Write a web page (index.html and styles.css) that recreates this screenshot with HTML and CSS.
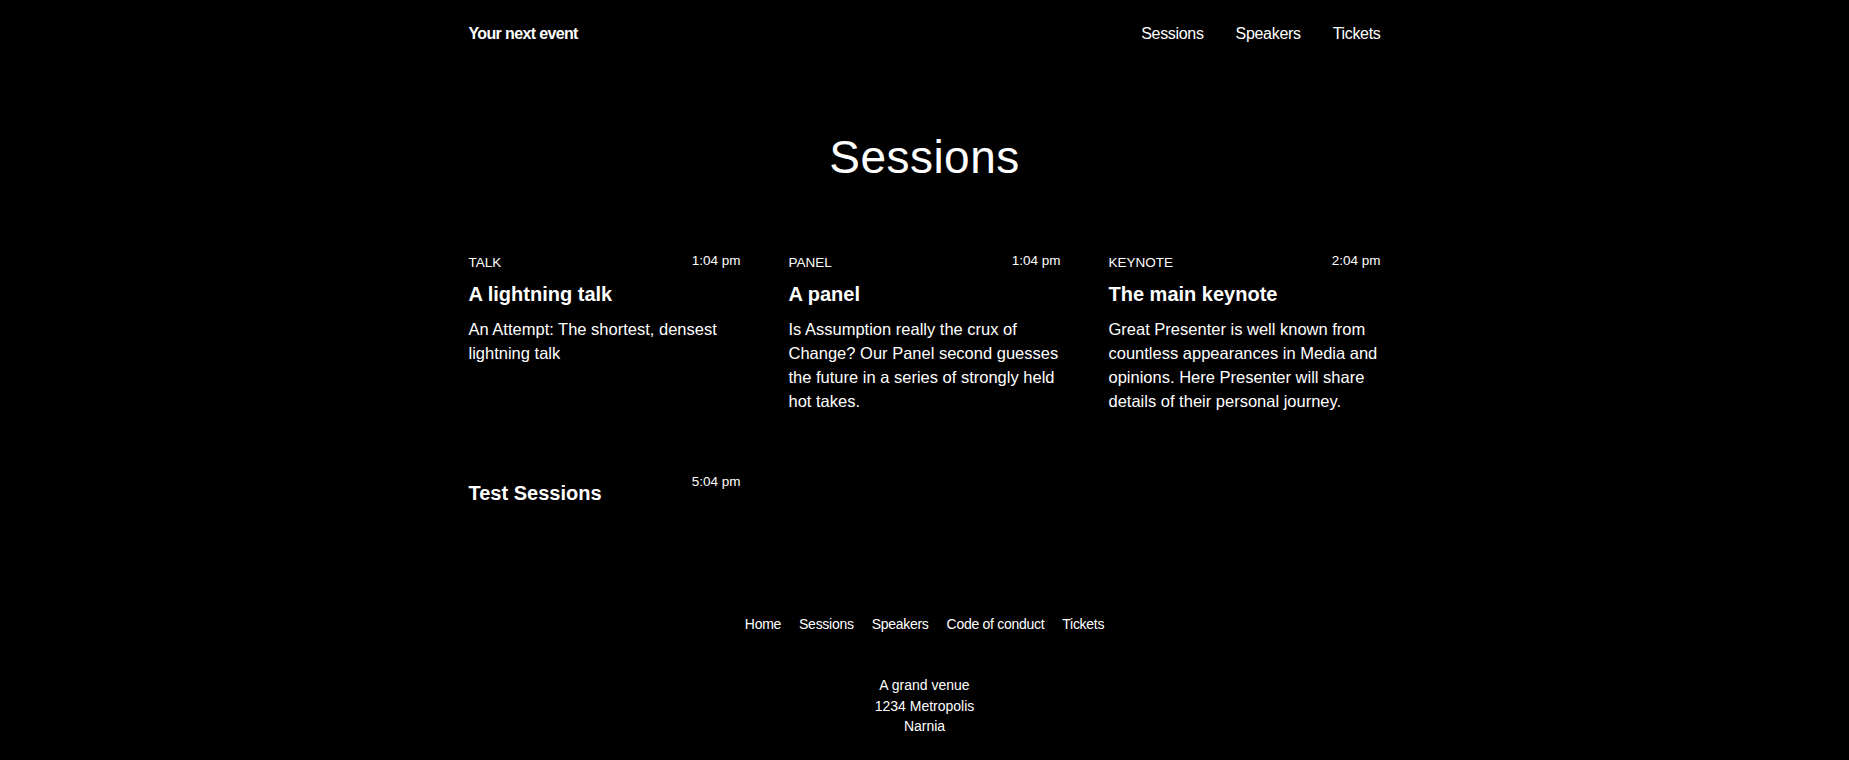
FILE: index.html
```html
<!DOCTYPE html>
<html lang="en">
<head>
    <meta charset="UTF-8">
    <meta name="viewport" content="width=device-width, initial-scale=1.0">
    <title>Sessions - Your next event</title>
    <link rel="stylesheet" href="styles.css">
</head>
<body>
    <header class="site-header">
        <a class="brand" href="#">Your next event</a>
        <nav class="main-nav">
            <a href="#">Sessions</a>
            <a href="#">Speakers</a>
            <a href="#">Tickets</a>
        </nav>
    </header>

    <main class="page">
        <h1 class="page-title">Sessions</h1>

        <div class="sessions">
            <article class="session">
                <div class="session-head">
                    <div>
                        <div class="session-type">Talk</div>
                        <h2 class="session-title">A lightning talk</h2>
                    </div>
                    <time class="session-time">1:04 pm</time>
                </div>
                <p class="session-desc">An Attempt: The shortest, densest lightning talk</p>
            </article>

            <article class="session">
                <div class="session-head">
                    <div>
                        <div class="session-type">Panel</div>
                        <h2 class="session-title">A panel</h2>
                    </div>
                    <time class="session-time">1:04 pm</time>
                </div>
                <p class="session-desc">Is Assumption really the crux of Change? Our Panel second guesses the future in a series of strongly held hot takes.</p>
            </article>

            <article class="session">
                <div class="session-head">
                    <div>
                        <div class="session-type">Keynote</div>
                        <h2 class="session-title">The main keynote</h2>
                    </div>
                    <time class="session-time">2:04 pm</time>
                </div>
                <p class="session-desc">Great Presenter is well known from countless appearances in Media and opinions. Here Presenter will share details of their personal journey.</p>
            </article>

            <article class="session">
                <div class="session-head">
                    <div>
                        <h2 class="session-title">Test Sessions</h2>
                    </div>
                    <time class="session-time">5:04 pm</time>
                </div>
            </article>
        </div>
    </main>

    <footer class="site-footer">
        <nav class="footer-nav">
            <a href="#">Home</a>
            <a href="#">Sessions</a>
            <a href="#">Speakers</a>
            <a href="#">Code of conduct</a>
            <a href="#">Tickets</a>
        </nav>
        <address class="venue">
            A grand venue<br>
            1234 Metropolis<br>
            Narnia
        </address>
    </footer>
</body>
</html>
```

FILE: styles.css
```css
body {
    margin: 0;
    background-color: #000;
    color: #fff;
    font-family: "Liberation Sans", Arial, sans-serif;
}
a {
    color: #fff;
    text-decoration: none;
}
.site-header {
    max-width: 912px;
    margin: 0 auto;
    padding-top: 24px;
    display: flex;
    justify-content: space-between;
    align-items: center;
    line-height: 20px;
}
.brand {
    font-size: 16px;
    font-weight: bold;
    letter-spacing: -0.04em;
}
.main-nav {
    display: flex;
    gap: 32px;
    font-size: 16px;
    letter-spacing: -0.02em;
}
.page {
    max-width: 912px;
    margin: 0 auto;
}
.page-title {
    margin: 85px 0 66px;
    font-size: 46px;
    font-weight: normal;
    line-height: 57px;
    letter-spacing: 0.01em;
    text-align: center;
}
.sessions {
    display: grid;
    grid-template-columns: repeat(3, 1fr);
    column-gap: 48px;
    row-gap: 60px;
}
.session-head {
    display: flex;
    justify-content: space-between;
    align-items: flex-start;
}
.session-type {
    font-size: 13.5px;
    line-height: 22px;
    text-transform: uppercase;
}
.session-time {
    font-size: 13.5px;
    line-height: 18px;
}
.session-title {
    margin: 6px 0 9px;
    font-size: 20px;
    line-height: 28px;
}
.session-desc {
    margin: 0;
    font-size: 16.5px;
    line-height: 24px;
}
.site-footer {
    padding-top: 98px;
    text-align: center;
    font-size: 14px;
}
.footer-nav {
    display: flex;
    justify-content: center;
    gap: 18px;
    line-height: 20px;
    letter-spacing: -0.02em;
}
.venue {
    margin-top: 41px;
    font-style: normal;
    line-height: 20.5px;
}
```
